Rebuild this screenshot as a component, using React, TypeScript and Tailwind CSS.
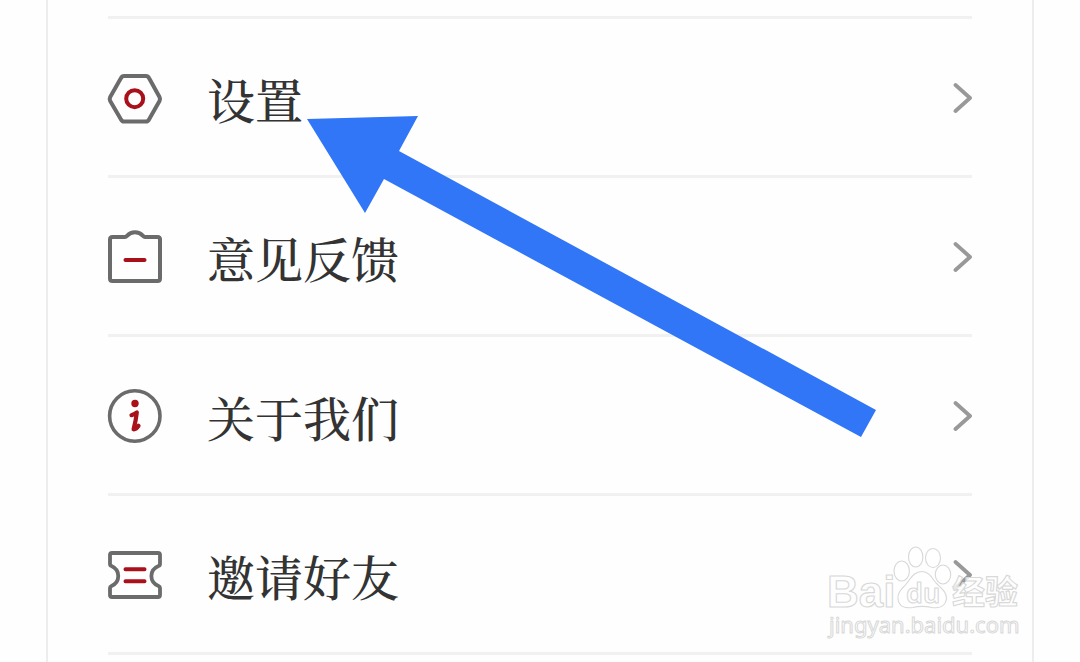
import type { ReactNode } from "react";

const GREY = "#6b6b6b";
const RED = "#a8101a";

function IconFrame({ children }: { children: ReactNode }) {
  return (
    <svg
      viewBox="0 0 60 60"
      className="size-[60px] shrink-0"
      fill="none"
      strokeWidth={4}
      strokeLinecap="round"
      strokeLinejoin="round"
      aria-hidden="true"
    >
      {children}
    </svg>
  );
}

function SettingsIcon() {
  return (
    <IconFrame>
      <path d="M19 8H41Q43 8 44 10L54.5 29Q55.5 31 54.5 33L44 51.5Q43 53.5 41 53.5H19Q17 53.5 16 51.5L5.2 33Q4.2 31 5.2 29L16 10Q17 8 19 8Z" stroke={GREY} />
      <circle cx="29.7" cy="30.7" r="8.5" stroke={RED} />
    </IconFrame>
  );
}

function FeedbackIcon() {
  return (
    <IconFrame>
      <path d="M7.5 10H20C22.5 10 22.5 5.2 30 5.2S37.5 10 40 10H52.5Q55 10 55 12.5V51.5Q55 54 52.5 54H7.5Q5 54 5 51.5V12.5Q5 10 7.5 10Z" stroke={GREY} />
      <path d="M20.5 33H39.5" stroke={RED} />
    </IconFrame>
  );
}

function AboutIcon() {
  return (
    <IconFrame>
      <circle cx="29.8" cy="30" r="25.2" stroke={GREY} strokeWidth={3.6} />
      <circle cx="30" cy="17.5" r="3.7" fill={RED} />
      <path d="M26.5 29.2Q29 28.3 31.8 26.5Q31 34 28.6 43.3Q31.5 43 33.5 39.8" stroke={RED} strokeWidth={4.2} />
    </IconFrame>
  );
}

function InviteIcon() {
  return (
    <IconFrame>
      <path d="M7 8H53Q55 8 55 10V19Q55 20.5 53.5 21C44 25 44 37 53.5 41Q55 41.7 55 43V50Q55 52 53 52H7Q5 52 5 50V43Q5 41.7 6.5 41C15.5 37 15.5 25 6.5 21Q5 20.5 5 19V10Q5 8 7 8Z" stroke={GREY} strokeWidth={3.8} />
      <path d="M20.5 24.2H39.5M20.5 36.2H39.5" stroke={RED} />
    </IconFrame>
  );
}

function Chevron() {
  return (
    <svg
      viewBox="0 0 20 32"
      className="h-8 w-5 shrink-0"
      fill="none"
      stroke="#999999"
      strokeWidth={3.8}
      strokeLinecap="round"
      strokeLinejoin="round"
      aria-hidden="true"
    >
      <path d="M3.5 3L18 16 3.5 29" />
    </svg>
  );
}

const items = [
  { label: "设置", href: "#settings", icon: <SettingsIcon /> },
  { label: "意见反馈", href: "#feedback", icon: <FeedbackIcon /> },
  { label: "关于我们", href: "#about", icon: <AboutIcon /> },
  { label: "邀请好友", href: "#invite", icon: <InviteIcon /> },
];

function Pointer() {
  return (
    <svg
      viewBox="0 0 570 322"
      className="pointer-events-none absolute top-[116px] left-[307px] h-[322px] w-[570px]"
      aria-hidden="true"
    >
      <path d="M0 3L111 0 92 35 569 294 554 321 77 63 58 97Z" fill="#3076f6" />
    </svg>
  );
}

function Watermark() {
  return (
    <svg
      viewBox="0 0 200 96"
      className="pointer-events-none absolute right-[54px] bottom-[20px] h-24 w-[200px]"
      fill="#ffffff"
      fillOpacity={0.8}
      stroke="#d8d8d8"
      strokeWidth={1.1}
      strokeLinejoin="round"
      role="img"
      aria-label="Baidu 经验"
    >
      <ellipse cx="75.7" cy="25" rx="7.7" ry="10" />
      <ellipse cx="89.7" cy="11" rx="7.2" ry="10" />
      <ellipse cx="107" cy="12" rx="7.5" ry="9.5" />
      <ellipse cx="117" cy="28.5" rx="7.7" ry="9.5" />
      <path d="M96 25.5C103 25.5 106 32 110 37C115 42 121 46 120.5 53C119 61 112 62.5 106 61.5C99 60 93 60 87 61.5C79 62.5 73 61 72 53C71 46 77 42 81 37C85 32 88 25.5 96 25.5Z" />
      <g className="font-['Liberation_Sans','Noto_Sans_CJK_SC',sans-serif] font-bold">
        <text x="1" y="61" fontSize="44">Bai</text>
        <text x="126" y="58" fontSize="33">经验</text>
      </g>
      <text x="80" y="57" fontSize="27" className="font-['Noto_Sans',sans-serif] font-semibold">du</text>
      <text x="3" y="87" fontSize="22" strokeWidth={1} className="font-['Noto_Sans',sans-serif]">
        jingyan.baidu.com
      </text>
    </svg>
  );
}

export default function App() {
  return (
    <main className="relative overflow-hidden bg-[#fefefe] px-[46px] text-[#333333]">
      <nav className="border-x-2 border-[#ededed] bg-[#fefefe] px-[60px] pt-4" aria-label="菜单">
        <ul className="border-t-3 border-[#f1f1f1]">
          {items.map((item) => (
            <li key={item.href} className="border-b-3 border-[#f1f1f1]">
              <a href={item.href} className="-ml-[3px] flex h-39 items-center pt-0.5">
                {item.icon}
                <span className="ml-[42px] flex-1 pt-0.5 font-['Noto_Serif_CJK_SC','Noto_Serif_SC','Noto_Sans_CJK_SC',serif] text-[48px] leading-[64px] font-medium">
                  {item.label}
                </span>
                <Chevron />
              </a>
            </li>
          ))}
        </ul>
        <div className="h-[7px]" />
      </nav>
      <Pointer />
      <Watermark />
    </main>
  );
}
